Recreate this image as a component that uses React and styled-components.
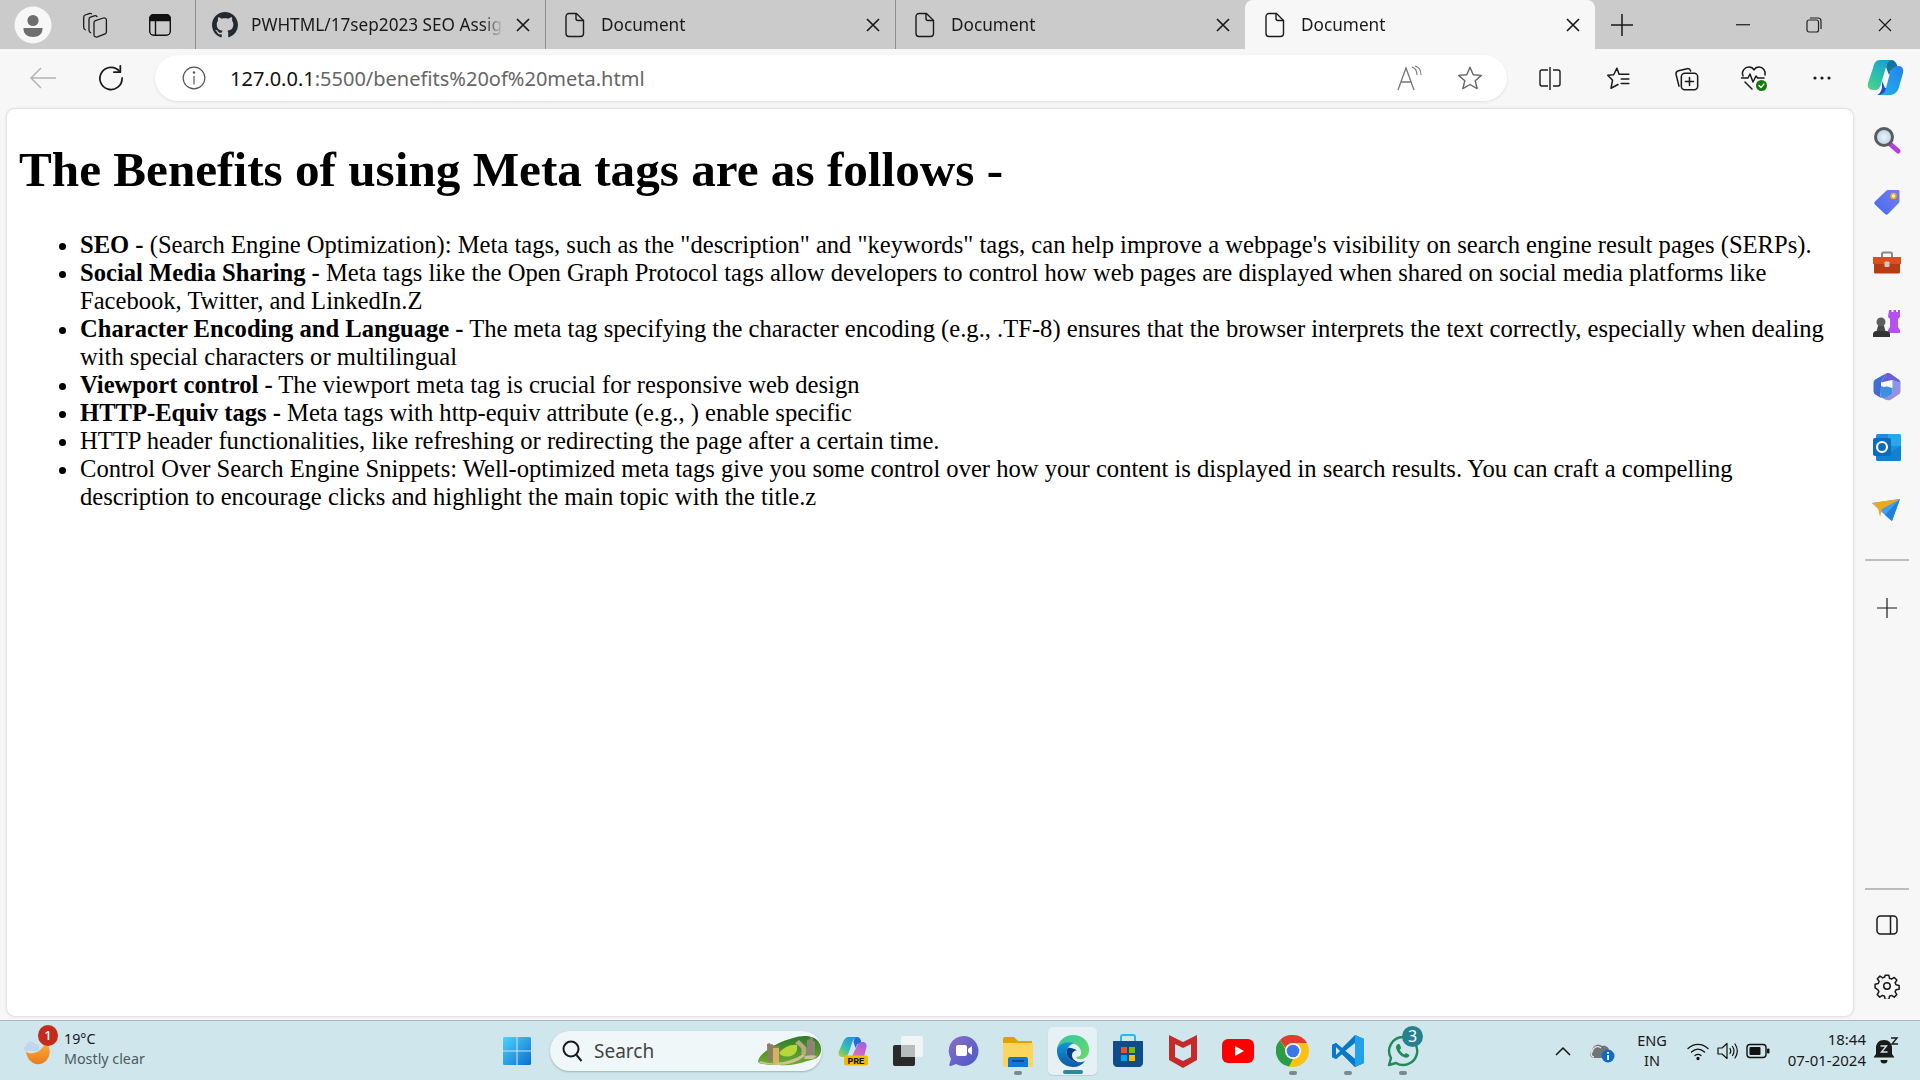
import React from 'react';
import styled, { createGlobalStyle } from 'styled-components';

const GlobalStyle = createGlobalStyle`
  html, body {
    margin: 0;
    padding: 0;
    height: 100%;
    overflow: hidden;
  }
`;

const uiFont = `'Noto Sans', 'Open Sans', sans-serif`;

const Stroke = ({ size = 24, w = 1.5, color = '#1a1a1a', children }) => (
  <svg width={size} height={size} viewBox="0 0 24 24" fill="none" stroke={color} strokeWidth={w} strokeLinecap="round" strokeLinejoin="round">
    {children}
  </svg>
);

const Flat = ({ size = 32, view = 32, children }) => (
  <svg width={size} height={size} viewBox={`0 0 ${view} ${view}`}>{children}</svg>
);

const Avatar = () => (
  <Flat size={38} view={38}>
    <circle cx="19" cy="19" r="18.5" fill="#f7f7f7" />
    <circle cx="19" cy="14.5" r="5.6" fill="#6e6e6e" />
    <path d="M9.5 22h19c.4 6-4 9-9.5 9s-9.9-3-9.5-9z" fill="#6e6e6e" />
  </Flat>
);

const CollectionsTab = () => (
  <svg width="26" height="26" viewBox="0 0 26 26" fill="none" stroke="#1a1a1a" strokeWidth="1.300" strokeLinejoin="round" strokeLinecap="round">
    <path d="M12 10.500c0-1 .5-1.600 1.400-1.900l8-2.600c1.400-.4 3 .4 3 2v12c0 1-.5 1.600-1.300 1.900l-7.700 3c-1.500.5-3.400-.3-3.400-2z" />
    <path d="M15 4.500c-.8-.9-1.700-1-2.700-.7L8.500 5.200C7.400 5.600 7 6.300 7 7.400v10.800c0 1 .6 2 1.600 2.500" />
    <path d="M9.500 1.800c-.7-.5-1.400-.5-2.300-.2L3.200 3C2.200 3.400 1.700 4.100 1.700 5.200v10c0 1 .5 2 1.500 2.600" />
  </svg>
);

const VerticalTabs = () => (
  <svg width="22" height="22" viewBox="0 0 22 22" fill="none" stroke="#111" strokeWidth="1.400">
    <rect x="0.700" y="0.700" width="20.600" height="20.600" rx="4" />
    <path d="M0.700 6.500V4.700a4 4 0 0 1 4-4h12.600a4 4 0 0 1 4 4v1.800z" fill="#111" />
    <path d="M6.500 6.500v15" />
  </svg>
);

const GithubMark = () => (
  <svg width="26" height="26" viewBox="0 0 16 16" fill="#24292f">
    <path d="M8 0C3.580 0 0 3.580 0 8c0 3.540 2.290 6.530 5.470 7.590.4.070.55-.170.55-.380 0-.190-.010-.820-.010-1.490-2.010.370-2.530-.490-2.690-.940-.090-.230-.480-.940-.820-1.130-.280-.150-.680-.520-.010-.530.630-.010 1.080.580 1.230.820.720 1.210 1.870.870 2.330.660.070-.520.280-.870.510-1.070-1.780-.200-3.640-.890-3.640-3.950 0-.870.310-1.590.820-2.150-.080-.200-.360-1.020.080-2.120 0 0 .670-.210 2.200.820.640-.180 1.320-.270 2-.270s1.360.090 2 .270c1.530-1.040 2.200-.820 2.200-.820.440 1.100.160 1.920.080 2.120.510.560.820 1.270.820 2.150 0 3.070-1.870 3.750-3.650 3.950.290.250.540.730.540 1.480 0 1.070-.010 1.930-.010 2.200 0 .210.150.460.550.380A8.013 8.013 0 0 0 16 8c0-4.420-3.580-8-8-8z" />
  </svg>
);

const DocIcon = () => (
  <svg width="20" height="26" viewBox="0 0 20 26" fill="none" stroke="#1a1a1a" strokeWidth="1.400" strokeLinejoin="round">
    <path d="M4 1.500h7.500l7 7V21.500a3 3 0 0 1-3 3H4a3 3 0 0 1-3-3V4.500a3 3 0 0 1 3-3z" />
    <path d="M11 1.500V6.500a2 2 0 0 0 2 2h5.500" />
  </svg>
);

const CloseX = ({ size = 16, w = 1.700 }) => (
  <svg width={size} height={size} viewBox="0 0 16 16" fill="none" stroke="#1a1a1a" strokeWidth={w}>
    <path d="M2 2l12 12M14 2L2 14" />
  </svg>
);

const PlusIcon = ({ size = 22, w = 1.500 }) => (
  <svg width={size} height={size} viewBox="0 0 22 22" fill="none" stroke="#1a1a1a" strokeWidth={w}>
    <path d="M11 0v22M0 11h22" />
  </svg>
);

const Copilot = () => (
  <svg width="38" height="40" viewBox="0 0 38 38">
    <defs>
      <linearGradient id="cpA" x1="0.700" y1="0" x2="0.200" y2="1">
        <stop offset="0" stopColor="#1c9fd8" />
        <stop offset="0.600" stopColor="#2bc4a8" />
        <stop offset="1" stopColor="#4ed08a" />
      </linearGradient>
      <linearGradient id="cpB" x1="1" y1="0" x2="0" y2="1">
        <stop offset="0" stopColor="#2a7fe8" />
        <stop offset="1" stopColor="#1cb4ec" />
      </linearGradient>
    </defs>
    <path d="M24 1c3 0 5 2 6 5l1 3c-4-1-7 1-8 5l-1 2-3-8c1-4 2-7 5-7z" fill="#13759c" />
    <path d="M13 1h11c-3 1-4 3-5 7l-5 17c-1 4-3 6-6 6H6c-4 0-6-3-5-7L6 9c1-5 3-8 7-8z" fill="url(#cpA)" />
    <path d="M12 29h9l-2 3c-1 2-3 4-6 4h-1c3-1 4-3 5-7z" fill="#1e46c8" />
    <path d="M15 22l3 7c-1 4-3 7-6 7H10c3-1 4-4 5-7z" fill="#2448d0" />
    <path d="M32 7c3 0 5 3 4 7l-4 14c-1 4-4 8-9 8H13c3-1 5-3 6-7l4-15c1-4 4-7 9-7z" fill="url(#cpB)" />
  </svg>
);

const HeartCheck = () => (
  <svg width="28" height="28" viewBox="0 0 28 28" fill="none" stroke="#1a1a1a" strokeWidth="1.500" strokeLinejoin="round" strokeLinecap="round">
    <path d="M3 12C1 7 5 3 9 3c2 0 4 1 5 3 1-2 3-3 5-3 4 0 7 4 6 8" />
    <path d="M1.500 14H8l2-4 3 8 3-6 1.500 2H24" />
    <path d="M5 18l7 7" />
    <circle cx="21.500" cy="21.500" r="5.500" fill="#107c10" stroke="none" />
    <path d="M19 21.500l2 2 3-3.500" stroke="#fff" strokeWidth="1.300" />
  </svg>
);

const SearchGlass = () => (
  <Flat size={30} view={30}>
    <defs>
      <radialGradient id="glass"><stop offset="0" stopColor="#eef5fb" /><stop offset="1" stopColor="#b4d0e6" /></radialGradient>
    </defs>
    <path d="M17 17l9 8" stroke="#b43fd9" strokeWidth="5" strokeLinecap="round" />
    <circle cx="12" cy="11" r="8.500" fill="url(#glass)" stroke="#5b5b5f" strokeWidth="3" />
  </Flat>
);

const TagIcon = () => (
  <Flat size={28} view={28}>
    <defs>
      <linearGradient id="tag" x1="0" y1="1" x2="1" y2="0"><stop offset="0" stopColor="#3f6df0" /><stop offset="1" stopColor="#7b7bf0" /></linearGradient>
    </defs>
    <path d="M15 2h10c1 0 1.500.5 1.500 1.500V13c0 1-.3 1.500-1 2.200L15 26c-1 1-2 1-3 0L2 16.500c-1-1-1-2 0-3L13 3c.7-.7 1.200-1 2-1z" fill="url(#tag)" />
    <circle cx="20.500" cy="8" r="2.500" fill="#f6f0d0" stroke="#e8b010" strokeWidth="1.600" />
  </Flat>
);

const Toolbox = () => (
  <Flat size={30} view={30}>
    <path d="M10 9V5c0-1 .7-1.500 1.500-1.500h7c.8 0 1.500.5 1.500 1.500v4" fill="none" stroke="#8a8a8a" strokeWidth="2" />
    <path d="M1 8h28v7H1z" fill="#d9501e" />
    <path d="M2 15h26v8c0 1-.7 1.500-1.500 1.500h-23C2.700 24.500 2 24 2 23z" fill="#b73c14" />
    <rect x="12.500" y="12.500" width="5" height="5.500" rx="1" fill="#c9c9c9" />
  </Flat>
);

const Chess = () => (
  <Flat size={30} view={30}>
    <path d="M18 1h2.500v2h2V1h2.500v2h2V1h2v7l-2 2v8l2 3v3H17v-3l2-3v-8l-2-2z" fill="#b650f0" transform="translate(-1 -1)" />
    <circle cx="9" cy="12" r="4.500" fill="#5f5f5f" />
    <path d="M6 16h6l2 7H4z" fill="#4a4a4a" />
    <path d="M1 24c0-2 2-3 3-3h10c2 0 4 1 4 3v3H1z" fill="#333" />
  </Flat>
);

const OfficeMark = () => (
  <Flat size={28} view={28}>
    <defs>
      <linearGradient id="ofA" x1="0" y1="0" x2="1" y2="1"><stop offset="0" stopColor="#2f79d8" /><stop offset="1" stopColor="#5b5bd0" /></linearGradient>
      <linearGradient id="ofB" x1="0" y1="0" x2="1" y2="1"><stop offset="0" stopColor="#58b0e8" /><stop offset="1" stopColor="#b57fdc" /></linearGradient>
    </defs>
    <path d="M13 0.500 3 6c-1.500 1-2.500 2-2.500 4v8c0 2 1 3 2.500 4l5 3c-1-3-1-6 0-8V9.500z" fill="url(#ofA)" />
    <path d="M13 0.500c2-.7 3.500-.5 5 .5l7 5c1.500 1 2.500 2 2.500 4L19 7 8 9.500z" fill="#6a5fd8" />
    <path d="M27.500 10v8c0 2-1 3-2.500 4l-7 4.500c-2 1.200-4 1-6 0L6 23c6 2 9 1 12-1 1-.7 1.500-1.500 1.500-3V7z" fill="url(#ofB)" />
    <path d="M8 13.500c4-2 8-1 11.500 1V19c0 1.500-.5 2.300-1.500 3-3 2-6 3-10 2.500-1.200-3.500-1.200-7.500 0-11z" fill="#3f8fdc" />
    <path d="M9.500 10 19 7.500v7.500l-4.500-1.500L9.500 14z" fill="#f7f7f7" />
  </Flat>
);

const Outlook = () => (
  <Flat size={30} view={30}>
    <rect x="4" y="1" width="25" height="27" rx="2" fill="#1490df" />
    <path d="M16 1h11c1 0 2 1 2 2v10H16z" fill="#28a8ea" />
    <path d="M4 14l12 7 13-8v13c0 1.500-1 2-2 2H6c-1 0-2-.5-2-2z" fill="#1280d0" />
    <rect x="1" y="5" width="18" height="18" rx="2" fill="#0f6cbd" />
    <circle cx="10" cy="14" r="5" fill="none" stroke="#fff" strokeWidth="2.200" />
  </Flat>
);

const PaperPlane = () => (
  <Flat size={30} view={30}>
    <path d="M0 8l28-4-8 22-7-6z" fill="#3c9ff0" />
    <path d="M0 8l28-4L10 14l-2 8-2-9z" fill="#f0a818" />
    <path d="M28 4 13 20l7 6z" fill="#1f7fe0" />
  </Flat>
);

const PanelIcon = () => (
  <svg width="22" height="20" viewBox="0 0 22 20" fill="none" stroke="#1a1a1a" strokeWidth="1.500">
    <rect x="1" y="1" width="20" height="18" rx="3.500" />
    <path d="M14.500 1v18" />
  </svg>
);

const GearIcon = () => (
  <Stroke size={26} w={1.400}>
    <circle cx="12" cy="12" r="3" />
    <path d="M10.300 2h3.400l.6 2.900 1.900.8 2.500-1.600 2.400 2.400-1.600 2.500.8 1.900 2.900.6v3.400l-2.900.6-.8 1.900 1.600 2.500-2.400 2.400-2.500-1.600-1.900.8-.6 2.900h-3.400l-.6-2.900-1.900-.8-2.500 1.600-2.400-2.400 1.600-2.500-.8-1.900L1 13.700v-3.400l2.900-.6.8-1.900-1.600-2.500 2.400-2.400 2.500 1.600 1.900-.8z" />
  </Stroke>
);

const WeatherIcon = () => (
  <Flat size={34} view={34}>
    <defs>
      <linearGradient id="moon" x1="0" y1="0" x2="0" y2="1"><stop offset="0" stopColor="#fbb03a" /><stop offset="1" stopColor="#ec7a1c" /></linearGradient>
    </defs>
    <path d="M3 20c6 3 16 1 19-10 4 3 6 8 4 14-2 6-8 9-13 8-5-1-9-6-10-12z" fill="url(#moon)" />
    <path d="M3 19c-3 0-3-5 0-5 0-5 7-6 9-2 4-1 5 3 4 4 1 2-1 3-2 3z" fill="#c3d5ee" />
  </Flat>
);

const WindowsLogo = () => (
  <svg width="30" height="30" viewBox="0 0 30 30">
    <defs>
      <linearGradient id="win" x1="0" y1="0" x2="1" y2="1"><stop offset="0" stopColor="#4fd2fb" /><stop offset="1" stopColor="#0a6fd0" /></linearGradient>
    </defs>
    <path d="M1 2.500A1.500 1.500 0 0 1 2.500 1H14.500V14.500H1zM15.500 1H27.500A1.500 1.500 0 0 1 29 2.500V14.500H15.500zM1 15.500H14.500V29H2.500A1.500 1.500 0 0 1 1 27.500zM15.500 15.500H29V27.500A1.500 1.500 0 0 1 27.500 29H15.500z" fill="url(#win)" />
  </svg>
);

const GreatWall = () => (
  <svg width="65" height="31" viewBox="0 0 65 31">
    <defs>
      <linearGradient id="hill" x1="0" y1="0" x2="0" y2="1"><stop offset="0" stopColor="#2e7a2a" /><stop offset="1" stopColor="#6fae2e" /></linearGradient>
    </defs>
    <path d="M1 26c1-4 4-7 8-10 6-5 16-10 27-13 9-3 20-3 25 3 4 5 4 11 1 15-3 3-7 4-12 5-8 3-18 5-28 4-7 0-12 0-16-1-3 0-5-1-5-3z" fill="url(#hill)" />
    <path d="M22 18c5-6 12-9 18-8 1 5-1 9-6 11-4 1-9 1-12-3z" fill="#b6d63c" />
    <path d="M10 9l3-1 .5 1.500 2-.5.500 1.500 2-.5.500 1.500 4-1v14l-12 2z" fill="#8b7f62" />
    <rect x="16" y="13" width="6" height="15" fill="#d6b25c" />
    <path d="M3 26c4 1 9 3 16 2 10-1 20-4 27-9l2 2c-7 6-17 9-27 9-7 0-14-1-19-2z" fill="#cdbf9c" />
    <path d="M38 8l4-3 6 6c2 2 2 6 0 10l-4-2c1-3 1-5-1-7z" fill="#b8a888" />
    <path d="M50 5l3-1v-2l3 .5V6l2 .5V20l-8 1z" fill="#8c8574" />
    <path d="M48 21c4-1 9-1 12 0l-4 3-9 0z" fill="#cdbf9c" />
  </svg>
);

const CopilotPre = () => (
  <svg width="30" height="30" viewBox="0 0 30 30">
    <defs>
      <linearGradient id="cppA" x1="0.800" y1="0" x2="0.100" y2="1">
        <stop offset="0" stopColor="#1f8fe0" />
        <stop offset="0.600" stopColor="#3ac0b0" />
        <stop offset="1" stopColor="#b8d030" />
      </linearGradient>
      <linearGradient id="cppB" x1="0.800" y1="0" x2="0.100" y2="1">
        <stop offset="0" stopColor="#a05ce8" />
        <stop offset="1" stopColor="#f070b0" />
      </linearGradient>
    </defs>
    <path d="M11 1h8c-3 1-4 3-5 6l-3 9c-1 3-2 5-5 5H4c-3 0-4-3-3-6L5 6c1-3 3-5 6-5z" fill="url(#cppA)" />
    <path d="M19 1c2 0 3.500 1.500 4 4l.5 2-4 1-2 4-2-6c.5-3 1.500-5 3.500-5z" fill="#1f6ed8" />
    <path d="M25 6c2.500 0 4 2.500 3.500 5l-2 8c-.5 2-2 3-4 3H12c2-1 3-3 4-6l3-6c1-2.500 3-4 6-4z" fill="url(#cppB)" />
    <rect x="6" y="19.500" width="24" height="10" rx="2" fill="#f5b800" />
    <PreLabel x="18" y="27.500" textAnchor="middle">PRE</PreLabel>
  </svg>
);

const TaskView = () => (
  <Flat size={34} view={34}>
    <rect x="2" y="11" width="22" height="21" rx="2" fill="#2a2a2a" />
    <rect x="10" y="2" width="22" height="21" rx="2" fill="#f4f6f7" fillOpacity="0.85" />
    <rect x="10" y="11" width="14" height="12" fill="#b8bcbd" />
  </Flat>
);

const MeetIcon = () => (
  <Flat size={34} view={34}>
    <defs>
      <linearGradient id="meet" x1="0" y1="0" x2="1" y2="1"><stop offset="0" stopColor="#8a6fc8" /><stop offset="1" stopColor="#4a58c8" /></linearGradient>
    </defs>
    <path d="M17 2a15 15 0 1 1-7 28l-5 2c-1 .4-2-.5-1.700-1.500L5 25A15 15 0 0 1 17 2z" fill="url(#meet)" />
    <rect x="10" y="11" width="11" height="11" rx="2" fill="#fff" />
    <path d="M22 15l4-3v9l-4-3z" fill="#fff" />
  </Flat>
);

const Explorer = () => (
  <Flat size={34} view={34}>
    <path d="M2 5c0-1 .6-2 2-2h9l4 4h14v5H2z" fill="#e0a200" />
    <path d="M2 9h30v22c0 1-.7 2-2 2H4c-1.300 0-2-1-2-2z" fill="#fbd55c" />
    <path d="M7 33v-8c0-1 .7-2 2-2h16c1.300 0 2 1 2 2v8z" fill="#0f78d4" />
    <rect x="11" y="26" width="12" height="2" fill="#0a4f90" />
  </Flat>
);

const EdgeIcon = () => (
  <Flat size={34} view={34}>
    <defs>
      <linearGradient id="edgeA" x1="0" y1="0" x2="1" y2="1"><stop offset="0" stopColor="#36c7a0" /><stop offset="1" stopColor="#6cd86a" /></linearGradient>
      <linearGradient id="edgeB" x1="0" y1="0" x2="0" y2="1"><stop offset="0" stopColor="#1098d8" /><stop offset="1" stopColor="#0c59a4" /></linearGradient>
    </defs>
    <path d="M17 1C9 1 2 7 1 15c3-5 9-7 14-6 6 1 11 5 10 11-.5 2-2 3-5 3 1 3 7 3 10 0 3-2 3-6 3-8C33 7 26 1 17 1z" fill="url(#edgeA)" />
    <path d="M1 15c-1 9 6 18 16 18 5 0 9-2 12-6-4 2-10 2-14-1-4-3-6-8-3-12 1-2 3-4 6-5-7-2-15 0-17 6z" fill="url(#edgeB)" />
    <path d="M12 14c-3 4-1 9 3 12 3 2 7 3 10 2.500-4 0-9-3-9-7 0-3 2-5 5-5-3-2-7-3-9-2.500z" fill="#0a3f88" />
  </Flat>
);

const StoreIcon = () => (
  <Flat size={34} view={34}>
    <path d="M10 7V3c0-1 .6-2 2-2h10c1.400 0 2 1 2 2v4" fill="none" stroke="#28b8f0" strokeWidth="2" />
    <path d="M2 7h30v22c0 2-2 4-4 4H6c-2 0-4-2-4-4z" fill="#0e4d8c" />
    <rect x="10" y="13" width="6" height="6" fill="#f25022" />
    <rect x="18" y="13" width="6" height="6" fill="#7fba00" />
    <rect x="10" y="21" width="6" height="6" fill="#00a4ef" />
    <rect x="18" y="21" width="6" height="6" fill="#ffb900" />
  </Flat>
);

const McAfee = () => (
  <Flat size={34} view={34}>
    <path d="M3 1l14 7 14-7v25L17 34 3 26z" fill="#c42a2a" />
    <path d="M9 10l8 4 8-4v13l-8 4-8-4z" fill="#cfe6ec" />
  </Flat>
);

const YouTube = () => (
  <svg width="32" height="24" viewBox="0 0 32 24">
    <rect width="32" height="24" rx="6" fill="#f00" />
    <path d="M13 7l9 5-9 5z" fill="#fff" />
  </svg>
);

const Chrome = () => (
  <Flat size={34} view={34}>
    <circle cx="17" cy="17" r="16" fill="#fbc116" />
    <path d="M17 1a16 16 0 0 1 14 8H17a8 8 0 0 0-7.500 5L4 6a16 16 0 0 1 13-5z" fill="#e33b2e" />
    <path d="M4 6l7 12a7 7 0 0 0 6 7l-4 7.500A16 16 0 0 1 4 6z" fill="#2b9d45" />
    <circle cx="17" cy="17" r="8" fill="#fff" />
    <circle cx="17" cy="17" r="6.300" fill="#3a78ea" />
  </Flat>
);

const VSCode = () => (
  <Flat size={34} view={34}>
    <path d="M24 1l9 4v24l-9 4-13-13-6 5-4-2V11l4-2 6 5z" fill="#0a78c8" />
    <path d="M24 1l9 4v24l-9 4z" fill="#22a0ea" />
    <path d="M24 9 14 17l10 8z" fill="#cfe6ec" />
    <path d="M1 11l4-2 19 16v8L11 20 5 25l-4-2 6-6z" fill="#0a78c8" />
    <path d="M5 13l4 4-4 4z" fill="#cfe6ec" />
  </Flat>
);

const WhatsApp = () => (
  <Flat size={34} view={34}>
    <path d="M17 3a14 14 0 1 1-7 26l-7 2 2-7A14 14 0 0 1 17 3z" fill="none" stroke="#1f8a5a" strokeWidth="2.400" strokeLinejoin="round" />
    <path d="M12 10c-2 1-2.500 3-1.500 5.500 1.500 4 5 7 8.500 8 2.500.5 4-.5 4.500-2.500l-3.500-2-1.500 1.500c-2-.7-4-2.700-4.800-4.700l1.500-1.500-1.500-4z" fill="#1f8a5a" />
  </Flat>
);

const Wifi = () => (
  <Stroke size={24} w={1.300} color="#111">
    <path d="M2 9.500c6-5.500 14-5.500 20 0" />
    <path d="M5.500 13c4-3.500 9-3.500 13 0" />
    <path d="M9 16.500c2-1.500 4-1.500 6 0" />
    <circle cx="12" cy="19.500" r="1" fill="#111" />
  </Stroke>
);

const Speaker = () => (
  <Stroke size={24} w={1.200} color="#111">
    <path d="M2 9h4l5-4.500v15L6 15H2z" />
    <path d="M14 9.500c1 1.500 1 3.500 0 5" />
    <path d="M16.500 7.500c2 3 2 6 0 9" />
    <path d="M19 5c3 4.500 3 9.500 0 14" />
  </Stroke>
);

const Battery = () => (
  <svg width="24" height="16" viewBox="0 0 24 16">
    <rect x="1" y="1.500" width="19" height="13" rx="3" fill="none" stroke="#111" strokeWidth="1.400" />
    <rect x="3.500" y="4" width="11" height="8" rx="1" fill="#111" />
    <rect x="21" y="5.500" width="2.500" height="5" rx="1" fill="#111" />
  </svg>
);

const OneDrive = () => (
  <Flat size={26} view={26}>
    <path d="M5 20C1 20 0 15 3 13c0-5 6-8 10-5 4-1 8 2 7 6 2 1 2 6-2 6z" fill="#6f7478" />
    <path d="M5 19c-2.500 0-3.500-3-2-5 1-5 6-7 9-4" fill="none" stroke="#e5e7e8" strokeWidth="1.300" />
    <circle cx="19" cy="18" r="6.500" fill="#0f6cbd" />
    <rect x="18.200" y="17" width="1.700" height="5" fill="#fff" />
    <rect x="18.200" y="14" width="1.700" height="1.700" fill="#fff" />
  </Flat>
);

const BellZz = () => (
  <svg width="26" height="28" viewBox="0 0 26 28">
    <path d="M11 3c5 0 8 3.500 8 8v6l2.500 3.500H.5L3 17v-6c0-4.500 3-8 8-8z" fill="#1a1a1a" />
    <path d="M7.500 23h7a3.500 3.500 0 0 1-7 0z" fill="#1a1a1a" />
    <path d="M7.500 9h6l-5 6h6" fill="none" stroke="#cfe6ec" strokeWidth="1.400" />
    <path d="M18 1h6l-5 6h6" fill="none" stroke="#1a1a1a" strokeWidth="1.400" />
  </svg>
);

const tabs = [
  { title: 'PWHTML/17sep2023 SEO Assignment', icon: <GithubMark /> },
  { title: 'Document', icon: <DocIcon /> },
  { title: 'Document', icon: <DocIcon /> },
  { title: 'Document', icon: <DocIcon />, active: true },
];

const sideTop = [<SearchGlass />, <TagIcon />, <Toolbox />, <Chess />, <OfficeMark />, <Outlook />, <PaperPlane />];

const apps = [
  { icon: <CopilotPre /> },
  { icon: <TaskView /> },
  { icon: <MeetIcon /> },
  { icon: <Explorer />, running: true },
  { icon: <EdgeIcon />, running: true, focused: true },
  { icon: <StoreIcon /> },
  { icon: <McAfee /> },
  { icon: <YouTube /> },
  { icon: <Chrome />, running: true },
  { icon: <VSCode />, running: true },
  { icon: <WhatsApp />, running: true, badge: '3' },
];

export default function App() {
  return (
    <>
      <GlobalStyle />
      <Screen>
        <TabStrip>
          <StripLeading>
            <Avatar />
            <StripButton $left={30}><CollectionsTab /></StripButton>
            <StripButton $left={41}><VerticalTabs /></StripButton>
          </StripLeading>
          {tabs.map((tab, i) => (
            <Tab key={i} $active={tab.active} $divider={!tab.active}>
              <TabIcon>{tab.icon}</TabIcon>
              <TabTitle>{tab.title}</TabTitle>
              <TabClose><CloseX /></TabClose>
            </Tab>
          ))}
          <NewTab><PlusIcon /></NewTab>
          <WindowControls>
            <WindowButton><svg width="14" height="2"><rect width="14" height="1.400" fill="#333" /></svg></WindowButton>
            <WindowButton>
              <svg width="16" height="16" viewBox="0 0 16 16" fill="none" stroke="#222" strokeWidth="1.200">
                <rect x="1" y="3" width="11.500" height="12" rx="2" />
                <path d="M4 1h8c2 0 3 1 3 3v8" />
              </svg>
            </WindowButton>
            <WindowButton><CloseX size={16} w={1.200} /></WindowButton>
          </WindowControls>
        </TabStrip>

        <Toolbar>
          <NavButton>
            <svg width="28" height="24" viewBox="0 0 28 24" fill="none" stroke="#b4b4b4" strokeWidth="1.500">
              <path d="M27 12H2M12 2 2 12l10 10" />
            </svg>
          </NavButton>
          <NavButton>
            <Stroke size={28} w={1.500}>
              <path d="M19.500 6.500A9.500 9.500 0 1 0 21.500 12" />
              <path d="M20 1.500v5.500h-5.500" />
            </Stroke>
          </NavButton>
          <AddressBar>
            <InfoIcon>
              <Stroke size={26} w={1.100} color="#555">
                <circle cx="12" cy="12" r="10" />
                <path d="M12 10.500v7" />
                <circle cx="12" cy="7" r=".6" fill="#555" />
              </Stroke>
            </InfoIcon>
            <Url>127.0.0.1<UrlRest>:5500/benefits%20of%20meta.html</UrlRest></Url>
            <AddressActions>
              <AddressAction>
                <svg width="28" height="26" viewBox="0 0 28 26" fill="none" stroke="#777" strokeWidth="1.300">
                  <path d="M2 25 10 3l8 22M5 17h10" />
                  <path d="M16 2c3 1 5 4 5 8M19 1c4 1 6 5 6 9" strokeWidth="1.100" />
                </svg>
              </AddressAction>
              <AddressAction>
                <svg width="26" height="26" viewBox="0 0 24 24" fill="none" stroke="#666" strokeWidth="1.300" strokeLinejoin="round">
                  <path d="M12 2l3 7 7.500.6-5.700 4.900 1.800 7.300L12 18l-6.600 3.800 1.800-7.300L1.500 9.600 9 9z" />
                </svg>
              </AddressAction>
            </AddressActions>
          </AddressBar>
          <ToolbarIcons>
            <ToolSlot>
              <svg width="24" height="24" viewBox="0 0 24 24" fill="none" stroke="#1a1a1a" strokeWidth="1.400">
                <path d="M10 4H4a2 2 0 0 0-2 2v12a2 2 0 0 0 2 2h6M15 4h5a2 2 0 0 1 2 2v12a2 2 0 0 1-2 2h-5M12 1v23" />
              </svg>
            </ToolSlot>
            <ToolSlot>
              <Stroke size={26} w={1.400}>
                <path d="M11 3l2 5.500h9M2.500 9.500l5.500-.5 3-6M2.500 9.500 7 14l-1.500 7.500L12 18" />
                <path d="M15 13h7M15 17h7" />
              </Stroke>
            </ToolSlot>
            <ToolSlot>
              <Stroke size={28} w={1.300}>
                <path d="M6 19 3.500 9c-.3-1.500.3-2.700 2-3.200L13 4c1.500-.3 2.500.5 3 2" />
                <rect x="8" y="8" width="14" height="14" rx="3" />
                <path d="M15 11.500v7M11.500 15h7" />
              </Stroke>
            </ToolSlot>
            <ToolSlot><HeartCheck /></ToolSlot>
            <ToolSlot>
              <svg width="20" height="4" viewBox="0 0 20 4" fill="#1a1a1a">
                <circle cx="3" cy="2" r="1.600" /><circle cx="10" cy="2" r="1.600" /><circle cx="17" cy="2" r="1.600" />
              </svg>
            </ToolSlot>
            <CopilotSlot><Copilot /></CopilotSlot>
          </ToolbarIcons>
        </Toolbar>

        <Middle>
          <Page>
            <Heading>The Benefits of using Meta tags are as follows -</Heading>
            <BenefitList>
              <li><b>SEO -</b> (Search Engine Optimization): Meta tags, such as the "description" and "keywords" tags, can help improve a webpage's visibility on search engine result pages (SERPs).</li>
              <li><b>Social Media Sharing -</b> Meta tags like the Open Graph Protocol tags allow developers to control how web pages are displayed when shared on social media platforms like Facebook, Twitter, and LinkedIn.Z</li>
              <li><b>Character Encoding and Language -</b> The meta tag specifying the character encoding (e.g., .TF-8) ensures that the browser interprets the text correctly, especially when dealing with special characters or multilingual</li>
              <li><b>Viewport control -</b> The viewport meta tag is crucial for responsive web design</li>
              <li><b>HTTP-Equiv tags -</b> Meta tags with http-equiv attribute (e.g., ) enable specific</li>
              <li>HTTP header functionalities, like refreshing or redirecting the page after a certain time.</li>
              <li>Control Over Search Engine Snippets: Well-optimized meta tags give you some control over how your content is displayed in search results. You can craft a compelling description to encourage clicks and highlight the main topic with the title.z</li>
            </BenefitList>
          </Page>
          <Sidebar>
            <SideGroup>
              {sideTop.map((icon, i) => <SideSlot key={i}>{icon}</SideSlot>)}
              <SideRule $top={18} $bottom={17} />
              <SideSlot><PlusIcon size={20} w={1.300} /></SideSlot>
            </SideGroup>
            <SideGroup>
              <SideRule $bottom={4} />
              <SideSlot><PanelIcon /></SideSlot>
              <SideSlot><GearIcon /></SideSlot>
            </SideGroup>
          </Sidebar>
        </Middle>

        <Taskbar>
          <Weather>
            <WeatherGlyph>
              <WeatherIcon />
              <WeatherBadge>1</WeatherBadge>
            </WeatherGlyph>
            <WeatherText>
              <Temp>19°C</Temp>
              <Sky>Mostly clear</Sky>
            </WeatherText>
          </Weather>
          <StartButton><WindowsLogo /></StartButton>
          <SearchPill>
            <svg width="22" height="24" viewBox="0 0 22 24" fill="none" stroke="#1a1a1a" strokeWidth="2">
              <circle cx="10" cy="10" r="7.500" />
              <path d="M15.500 16l5 6" />
            </svg>
            <SearchLabel>Search</SearchLabel>
            <GreatWall />
          </SearchPill>
          <AppRow>
            {apps.map((app, i) => (
              <AppSlot key={i} $focused={app.focused}>
                {app.icon}
                {app.badge && <AppBadge>{app.badge}</AppBadge>}
                {app.running && <RunDot $focused={app.focused} />}
              </AppSlot>
            ))}
          </AppRow>
          <Tray>
            <TrayIcon $w={40}>
              <svg width="16" height="10" viewBox="0 0 16 10" fill="none" stroke="#111" strokeWidth="1.500"><path d="M1 9l7-7 7 7" /></svg>
            </TrayIcon>
            <TrayIcon $w={38}><OneDrive /></TrayIcon>
            <Lang>ENG<br />IN</Lang>
            <TrayIcon $w={30}><Wifi /></TrayIcon>
            <TrayIcon $w={30}><Speaker /></TrayIcon>
            <TrayIcon $w={30}><Battery /></TrayIcon>
            <Clock>18:44<br />07-01-2024</Clock>
            <TrayIcon $w={38}><BellZz /></TrayIcon>
          </Tray>
        </Taskbar>
      </Screen>
    </>
  );
}

const Screen = styled.div`
  width: 1920px;
  height: 1080px;
  display: flex;
  flex-direction: column;
  background: #f7f7f7;
  font-family: ${uiFont};
  overflow: hidden;
`;

const TabStrip = styled.div`
  height: 49px;
  flex: none;
  display: flex;
  background: #cbcbcb;
`;

const StripLeading = styled.div`
  width: 195px;
  flex: none;
  display: flex;
  align-items: center;
  padding-left: 14px;
  box-sizing: border-box;
`;

const StripButton = styled.div`
  display: flex;
  margin-left: ${p => p.$left}px;
`;

const Tab = styled.div`
  width: 350px;
  flex: none;
  box-sizing: border-box;
  display: flex;
  align-items: center;
  padding-left: 16px;
  background: ${p => (p.$active ? '#f7f7f7' : 'transparent')};
  border-radius: ${p => (p.$active ? '8px 8px 0 0' : '0')};
  border-left: 1px solid ${p => (p.$divider ? '#8f8f8f' : 'transparent')};
`;

const TabIcon = styled.div`
  width: 26px;
  display: flex;
  justify-content: center;
  flex: none;
`;

const TabTitle = styled.div`
  margin-left: 13px;
  width: 252px;
  flex: none;
  white-space: nowrap;
  overflow: hidden;
  font-size: 17.200px;
  color: #1a1a1a;
  mask-image: linear-gradient(to right, #000 92%, transparent 100%);
`;

const TabClose = styled.div`
  margin-left: 12px;
  display: flex;
`;

const NewTab = styled.div`
  width: 54px;
  display: flex;
  align-items: center;
  justify-content: center;
`;

const WindowControls = styled.div`
  margin-left: auto;
  display: flex;
`;

const WindowButton = styled.div`
  width: 71px;
  display: flex;
  align-items: center;
  justify-content: center;
`;

const Toolbar = styled.div`
  height: 60px;
  flex: none;
  display: flex;
  align-items: center;
  padding: 0 0 3px 9px;
  box-sizing: border-box;
`;

const NavButton = styled.div`
  width: 68px;
  height: 46px;
  display: flex;
  align-items: center;
  justify-content: center;
`;

const AddressBar = styled.div`
  margin-left: 10px;
  width: 1352px;
  height: 46px;
  flex: none;
  box-sizing: border-box;
  display: flex;
  align-items: center;
  padding-left: 26px;
  background: #fff;
  border-radius: 23px;
  box-shadow: 0 1px 3px rgba(0, 0, 0, 0.1);
`;

const InfoIcon = styled.div`
  display: flex;
  width: 26px;
`;

const Url = styled.div`
  margin: 1px 0 0 23px;
  font-size: 20px;
  color: #111;
`;

const UrlRest = styled.span`
  color: #666;
`;

const AddressActions = styled.div`
  margin-left: auto;
  display: flex;
  padding-right: 24px;
  gap: 33px;
`;

const AddressAction = styled.div`
  display: flex;
`;

const ToolbarIcons = styled.div`
  margin-left: 9px;
  display: flex;
`;

const ToolSlot = styled.div`
  width: 68px;
  height: 46px;
  display: flex;
  align-items: center;
  justify-content: center;
`;

const CopilotSlot = styled(ToolSlot)`
  margin-left: -4px;
`;

const Middle = styled.div`
  flex: 1;
  min-height: 0;
  display: flex;
  padding-left: 7px;
`;

const Page = styled.main`
  width: 1846px;
  height: 907px;
  flex: none;
  box-sizing: border-box;
  padding: 1px 12px 0;
  background: #fff;
  border-radius: 8px;
  box-shadow: 0 0 3px rgba(0, 0, 0, 0.22);
  color: #000;
  font-family: 'Liberation Serif', 'Times New Roman', serif;
  font-size: 24.600px;
`;

const Heading = styled.h1`
  margin: 31px 0 33px;
  font-size: 49.200px;
`;

const BenefitList = styled.ul`
  margin: 0;
  padding-left: 61px;
`;

const Sidebar = styled.aside`
  flex: 1;
  display: flex;
  flex-direction: column;
  justify-content: space-between;
  padding: 1px 0 3px 1px;
`;

const SideGroup = styled.div`
  display: flex;
  flex-direction: column;
  align-items: center;
`;

const SideSlot = styled.div`
  width: 100%;
  height: 61.500px;
  display: flex;
  align-items: center;
  justify-content: center;
`;

const SideRule = styled.div`
  width: 44px;
  height: 2px;
  flex: none;
  margin: ${p => p.$top || 0}px 0 ${p => p.$bottom || 0}px;
  background: #bdbdbd;
`;

const Taskbar = styled.footer`
  height: 60px;
  flex: none;
  box-sizing: border-box;
  display: flex;
  align-items: center;
  background: #cfe6ec;
  border-top: 1px solid #a8b8c0;
`;

const Weather = styled.div`
  width: 500px;
  flex: none;
  box-sizing: border-box;
  padding: 0 0 4px 23px;
  display: flex;
  align-items: center;
`;

const WeatherGlyph = styled.div`
  position: relative;
  width: 41px;
  display: flex;
`;

const WeatherBadge = styled.div`
  position: absolute;
  left: 15px;
  top: -7px;
  width: 20px;
  height: 21px;
  border-radius: 50%;
  background: #c42b1c;
  color: #fff;
  font-size: 13px;
  font-weight: 500;
  line-height: 21px;
  text-align: center;
`;

const WeatherText = styled.div`
  display: flex;
  flex-direction: column;
  gap: 2px;
`;

const Temp = styled.div`
  font-size: 14.300px;
  line-height: 18px;
  color: #1a1a1a;
`;

const Sky = styled.div`
  font-size: 14.300px;
  line-height: 18px;
  color: #4d5a60;
`;

const StartButton = styled.div`
  width: 33px;
  display: flex;
  justify-content: center;
`;

const SearchPill = styled.div`
  margin-left: 17px;
  width: 272px;
  height: 40px;
  flex: none;
  box-sizing: border-box;
  display: flex;
  align-items: center;
  padding: 0 0 0 11px;
  background: #eff7f9;
  border-radius: 20px;
  box-shadow: 0 1px 2px rgba(60, 80, 90, 0.35);
`;

const SearchLabel = styled.div`
  margin-left: 11px;
  font-size: 19px;
  color: #444;
  flex: 1;
`;

const PreLabel = styled.text`
  font-family: 'Liberation Mono', monospace;
  font-weight: 700;
  font-size: 9.500px;
  fill: #111;
`;

const AppRow = styled.div`
  margin-left: 3px;
  display: flex;
`;

const AppSlot = styled.div`
  position: relative;
  width: 55.100px;
  height: 48px;
  display: flex;
  align-items: center;
  justify-content: center;
  &::before {
    content: '';
    display: ${p => (p.$focused ? 'block' : 'none')};
    position: absolute;
    inset: 0 3px;
    border-radius: 5px;
    background: rgba(255, 255, 255, 0.45);
    box-shadow: 0 1px 1px rgba(60, 80, 90, 0.15);
  }
  svg {
    position: relative;
  }
`;

const RunDot = styled.span`
  position: absolute;
  bottom: ${p => (p.$focused ? '1px' : '0')};
  left: 50%;
  width: ${p => (p.$focused ? '20px' : '8px')};
  height: 4px;
  border-radius: 2px;
  transform: translateX(-50%);
  background: ${p => (p.$focused ? '#2b8a9c' : '#7a8a90')};
`;

const AppBadge = styled.span`
  position: absolute;
  top: -1px;
  right: 8px;
  width: 21px;
  height: 21px;
  border-radius: 50%;
  background: #26808f;
  color: #fff;
  font-size: 16px;
  line-height: 21px;
  text-align: center;
`;

const Tray = styled.div`
  margin-left: auto;
  display: flex;
  align-items: center;
  padding-right: 15px;
`;

const TrayIcon = styled.div`
  width: ${p => p.$w}px;
  display: flex;
  align-items: center;
  justify-content: center;
`;

const Lang = styled.div`
  width: 56px;
  margin: 0 3px;
  font-size: 14.500px;
  line-height: 20px;
  text-align: center;
  color: #1a1a1a;
  transform: translateY(-1px);
`;

const Clock = styled.div`
  width: 93px;
  margin-right: 1px;
  font-size: 15px;
  line-height: 21px;
  text-align: right;
  color: #1a1a1a;
  transform: translateY(-1px);
`;
